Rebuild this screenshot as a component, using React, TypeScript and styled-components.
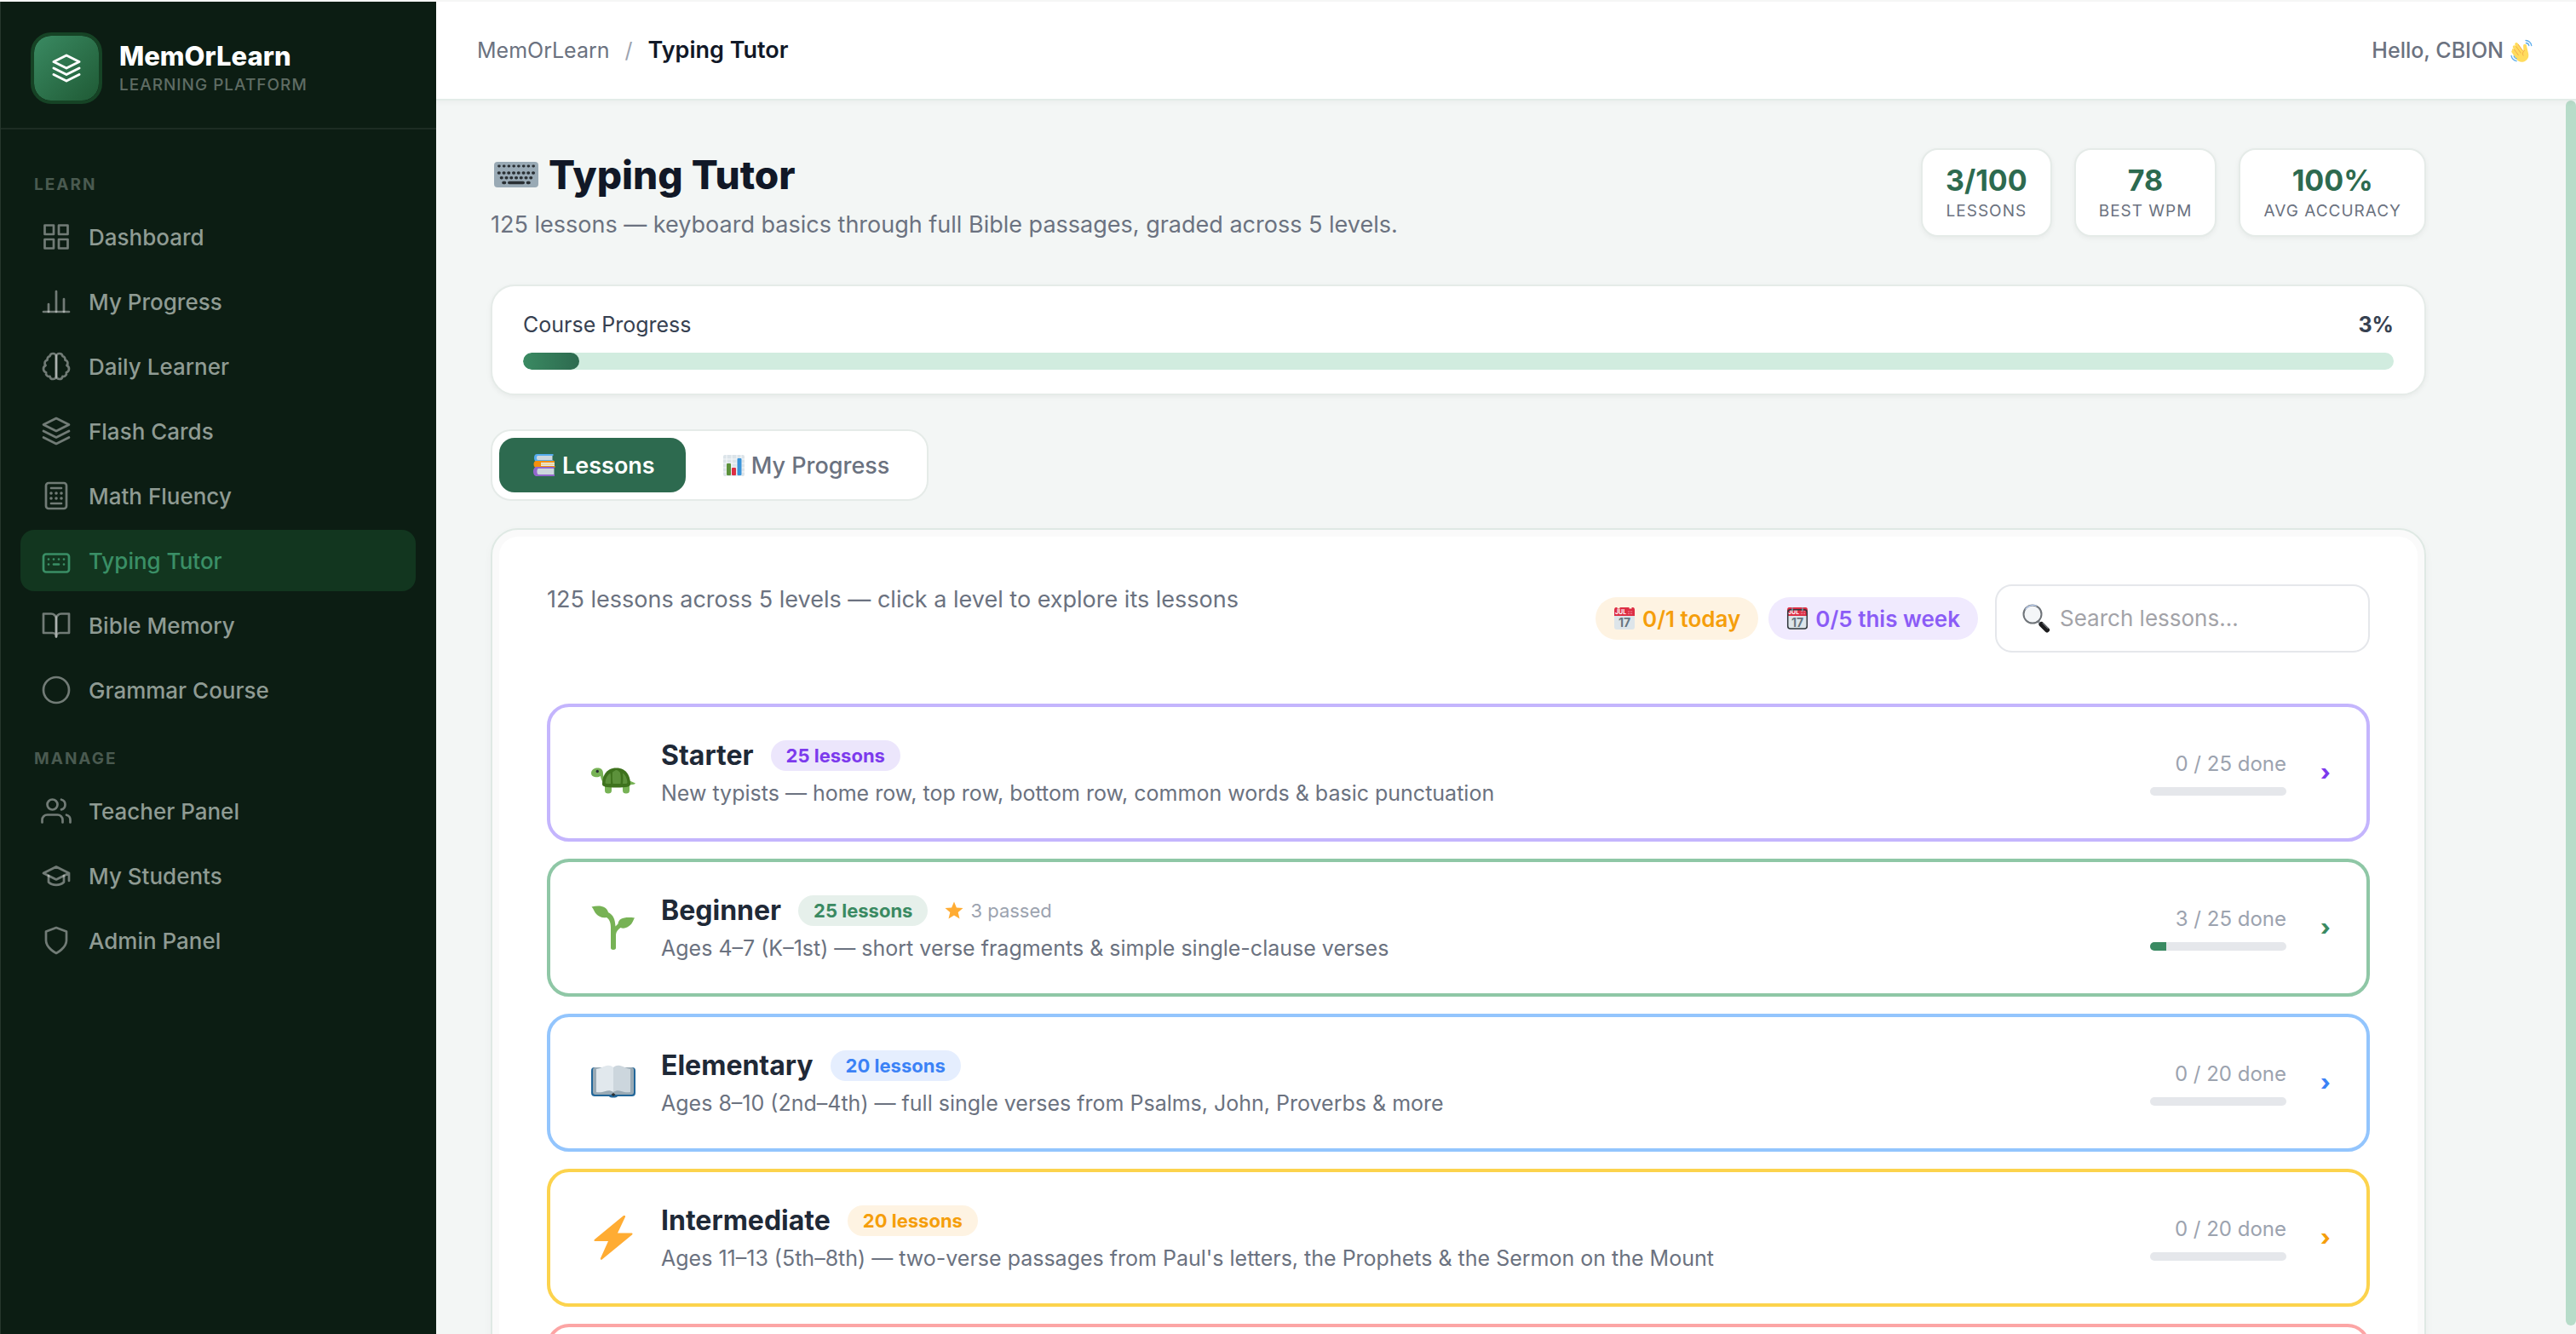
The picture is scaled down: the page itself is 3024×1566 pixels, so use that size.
import React from "react";
import styled, { createGlobalStyle } from "styled-components";

const GlobalStyle = createGlobalStyle`
  *, *::before, *::after { box-sizing: border-box; }
  body {
    margin: 0;
    font-family: Inter, "Open Sans", sans-serif;
    background: #f3f6f5;
    color: #111827;
    -webkit-font-smoothing: antialiased;
  }
  h1, h2, p { margin: 0; }
  button, input { font: inherit; }
`;

/* ---------- shell ---------- */

const Shell = styled.div`
  display: grid;
  grid-template-columns: 512px minmax(0, 1fr);
  height: 100vh;
  overflow: hidden;
  border-top: 2px solid #f5f6f5;
`;

const Sidebar = styled.aside`
  background: #0c1d13;
  border-left: 1px solid #26362c;
  min-height: 0;
`;

const Brand = styled.div`
  display: flex;
  align-items: center;
  gap: 20px;
  padding: 36px 36px 28px 35px;
  border-bottom: 2px solid #1d2c23;
`;

const Logo = styled.div`
  display: grid;
  place-items: center;
  flex: none;
  width: 84px;
  height: 84px;
  border: 4px solid #164325;
  border-radius: 24px;
  background: linear-gradient(135deg, #3a8a62, #1f5a35) padding-box;
`;

const BrandText = styled.div`
  display: flex;
  flex-direction: column;
`;

const BrandName = styled.span`
  font-size: 31px;
  line-height: 40px;
  font-weight: 800;
  color: #ffffff;
`;

const BrandTag = styled.span`
  font-size: 19px;
  line-height: 28px;
  font-weight: 500;
  letter-spacing: 1px;
  color: #5f6c64;
`;

const Nav = styled.nav`
  display: flex;
  flex-direction: column;
  gap: 30px;
  padding: 50px 24px 24px 23px;
`;

const NavGroup = styled.div`
  display: flex;
  flex-direction: column;
  gap: 4px;
`;

const NavLabel = styled.h2`
  margin-bottom: 6px;
  padding: 0 16px;
  font-size: 19px;
  line-height: 30px;
  font-weight: 700;
  letter-spacing: 2px;
  color: #4a5a50;
`;

const NavLink = styled.a<{ $active?: boolean }>`
  display: flex;
  align-items: center;
  gap: 20px;
  height: 72px;
  padding: 0 24px;
  border-radius: 16px;
  font-size: 26px;
  font-weight: 500;
  text-decoration: none;
  color: ${(p) => (p.$active ? "#3a8f66" : "#8f9b93")};
  background: ${(p) => (p.$active ? "#12361f" : "transparent")};
`;

const LineIcon = styled.svg<{ $tone: string; $weight?: number }>`
  flex: none;
  width: 36px;
  height: 36px;
  fill: none;
  stroke: ${(p) => p.$tone};
  stroke-width: ${(p) => p.$weight ?? 1.8};
  stroke-linecap: round;
  stroke-linejoin: round;
`;

/* ---------- top bar ---------- */

const Main = styled.div`
  display: flex;
  flex-direction: column;
  min-height: 0;
`;

const TopBar = styled.header`
  position: relative;
  display: flex;
  align-items: center;
  justify-content: space-between;
  flex: none;
  height: 116px;
  padding: 0 50px 0 48px;
  background: #ffffff;
  border-bottom: 2px solid #e3ece8;
  box-shadow: 0 2px 6px rgba(0, 0, 0, 0.04);
`;

const Crumbs = styled.nav`
  display: flex;
  align-items: center;
  gap: 18px;
  font-size: 25px;
  line-height: 36px;
  color: #6b7280;
`;

const CrumbLink = styled.a`
  color: inherit;
  text-decoration: none;
`;

const Slash = styled.span`
  color: #9ca3af;
`;

const CrumbCurrent = styled.span`
  font-size: 27px;
  font-weight: 600;
  color: #111827;
`;

const Greeting = styled.div`
  display: flex;
  align-items: center;
  gap: 8px;
  font-size: 25px;
  line-height: 36px;
  font-weight: 500;
  color: #6b7280;
`;

const Picture = styled.svg<{ $w: number; $h?: number }>`
  flex: none;
  display: block;
  width: ${(p) => p.$w}px;
  height: ${(p) => p.$h ?? p.$w}px;
`;

/* ---------- page ---------- */

const Body = styled.div`
  display: flex;
  flex: 1;
  min-height: 0;
`;

const Scroller = styled.main`
  flex: 1;
  min-width: 0;
  overflow: hidden;
`;

const ScrollTrack = styled.div`
  flex: none;
  width: 12px;
  padding-bottom: 10px;
`;

const ScrollThumb = styled.div`
  height: 100%;
  border-radius: 6px;
  background: #b7dcc9;
`;

const Page = styled.div`
  max-width: 2400px;
  padding: 56px 64px;
`;

const PageHead = styled.div`
  display: flex;
  align-items: flex-start;
  justify-content: space-between;
  margin-bottom: 50px;
`;

const Title = styled.h1`
  display: flex;
  align-items: center;
  gap: 12px;
  padding-left: 4px;
  font-size: 46px;
  line-height: 62px;
  font-weight: 800;
  color: #111827;
`;

const Subtitle = styled.p`
  margin-top: 8px;
  font-size: 27px;
  line-height: 40px;
  color: #6b7280;
`;

const Stats = styled.div`
  display: flex;
  gap: 26px;
`;

const surface = `
  background: #ffffff;
  border: 2px solid #e5ebe8;
  box-shadow: 0 2px 6px rgba(0, 0, 0, 0.05);
`;

const Stat = styled.div`
  ${surface}
  display: flex;
  flex-direction: column;
  gap: 2px;
  padding: 16px 27px 14px;
  border-radius: 20px;
  text-align: center;
`;

const StatValue = styled.span`
  font-size: 34px;
  line-height: 40px;
  font-weight: 700;
  color: #2d6a4f;
`;

const StatLabel = styled.span`
  font-size: 19px;
  line-height: 28px;
  letter-spacing: 1px;
  color: #6b7280;
`;

const ProgressCard = styled.section`
  ${surface}
  padding: 26px 36px 28px;
  border-radius: 28px;
  margin-bottom: 40px;
`;

const ProgressHead = styled.div`
  display: flex;
  justify-content: space-between;
  margin-bottom: 14px;
  font-size: 25px;
  line-height: 38px;
  color: #374151;
`;

const Bar = styled.div`
  height: 20px;
  border-radius: 10px;
  overflow: hidden;
  background: #d1ecdf;
`;

const BarFill = styled.div`
  height: 100%;
  border-radius: 10px;
  background: linear-gradient(90deg, #3a8a62, #2d6a4f);
`;

const Tabs = styled.div`
  ${surface}
  display: inline-flex;
  gap: 4px;
  padding: 8px;
  border-radius: 24px;
  margin-bottom: 32px;
  vertical-align: top;
  box-shadow: none;
`;

const Tab = styled.button<{ $active?: boolean }>`
  display: flex;
  align-items: center;
  gap: 8px;
  height: 64px;
  padding: 0 36px 0 40px;
  border: 0;
  border-radius: 18px;
  font-size: 27px;
  font-weight: ${(p) => (p.$active ? 600 : 500)};
  color: ${(p) => (p.$active ? "#ffffff" : "#6b7280")};
  background: ${(p) => (p.$active ? "#2d6a4f" : "transparent")};
`;

const Panel = styled.section`
  padding: 64px;
  border: 2px solid #dfe9e4;
  border-radius: 32px;
  background: #ffffff;
  box-shadow: inset 0 0 0 8px #fafafa, 0 4px 12px rgba(0, 0, 0, 0.03);
`;

const Toolbar = styled.div`
  display: flex;
  align-items: flex-start;
  justify-content: space-between;
  margin-bottom: 60px;
`;

const ToolbarText = styled.p`
  font-size: 27px;
  line-height: 36px;
  color: #6b7280;
`;

const Tools = styled.div`
  display: flex;
  align-items: center;
  gap: 20px;
`;

const Goals = styled.div`
  display: flex;
  gap: 12px;
`;

const Goal = styled.span<{ $ink: string; $tint: string }>`
  display: flex;
  align-items: center;
  gap: 8px;
  height: 50px;
  padding: 0 21px;
  border-radius: 25px;
  font-size: 26px;
  font-weight: 600;
  color: ${(p) => p.$ink};
  background: ${(p) => p.$tint};
`;

const Search = styled.label`
  display: flex;
  align-items: center;
  gap: 10px;
  width: 440px;
  height: 80px;
  padding: 0 30px;
  border: 2px solid #e5e7eb;
  border-radius: 20px;
  background: #ffffff;
`;

const SearchInput = styled.input`
  flex: 1;
  min-width: 0;
  padding: 0;
  border: 0;
  outline: 0;
  background: transparent;
  font-size: 26px;
  line-height: 36px;
  color: #111827;
  &::placeholder { color: #a3a3a8; opacity: 1; }
`;

/* ---------- levels ---------- */

const Levels = styled.div`
  display: flex;
  flex-direction: column;
  gap: 20px;
`;

const LevelCard = styled.button<{ $edge: string }>`
  display: flex;
  align-items: center;
  width: 100%;
  min-height: 162px;
  padding: 35px 42px 35px 48px;
  border: 4px solid ${(p) => p.$edge};
  border-radius: 26px;
  background: #ffffff;
  text-align: left;
`;

const LevelText = styled.span`
  display: flex;
  flex: 1;
  flex-direction: column;
  gap: 8px;
  padding: 4px 0 0 30px;
`;

const LevelHead = styled.span`
  display: flex;
  align-items: center;
  gap: 20px;
  line-height: 36px;
`;

const LevelName = styled.span`
  font-size: 32px;
  font-weight: 700;
  color: #1f2937;
`;

const Badge = styled.span<{ $ink: string; $tint: string }>`
  height: 36px;
  padding: 0 18px;
  border-radius: 18px;
  font-size: 22px;
  font-weight: 700;
  color: ${(p) => p.$ink};
  background: ${(p) => p.$tint};
`;

const Passed = styled.span`
  display: flex;
  align-items: center;
  gap: 8px;
  font-size: 22px;
  color: #9ca3af;
`;

const LevelDesc = styled.span`
  font-size: 25px;
  line-height: 36px;
  color: #6b7280;
`;

const LevelDone = styled.span`
  display: flex;
  flex-direction: column;
  gap: 11px;
  width: 160px;
  margin-right: 40px;
  font-size: 24px;
  line-height: 32px;
  text-align: right;
  white-space: nowrap;
  color: #9ca3af;
`;

const MiniBar = styled.span`
  display: block;
  height: 10px;
  border-radius: 5px;
  overflow: hidden;
  background: #e5e7eb;
`;

const MiniFill = styled.span<{ $ink: string }>`
  display: block;
  height: 100%;
  background: ${(p) => p.$ink};
`;

const Chevron = styled.span<{ $ink: string }>`
  width: 12px;
  font-size: 26px;
  line-height: 32px;
  font-weight: 800;
  color: ${(p) => p.$ink};
`;

/* ---------- drawings ---------- */

const layers = (
  <>
    <path d="M12 2 2 7l10 5 10-5z" />
    <path d="m2 12 10 5 10-5" />
    <path d="m2 17 10 5 10-5" />
  </>
);

const icons: Record<string, React.ReactNode> = {
  grid: (
    <>
      <rect x="3" y="3" width="7" height="7" />
      <rect x="14" y="3" width="7" height="7" />
      <rect x="3" y="14" width="7" height="7" />
      <rect x="14" y="14" width="7" height="7" />
    </>
  ),
  bars: (
    <>
      <path d="M18 20V10" />
      <path d="M12 20V4" />
      <path d="M6 20v-6" />
      <path d="M2 20h20" />
    </>
  ),
  brain: (
    <>
      <path d="M9.5 2A2.5 2.5 0 0 1 12 4.5v15a2.5 2.5 0 0 1-4.96.44 2.5 2.5 0 0 1-2.96-3.08 3 3 0 0 1-.34-5.58 2.5 2.5 0 0 1 1.32-4.24 2.5 2.5 0 0 1 1.98-3A2.5 2.5 0 0 1 9.5 2Z" />
      <path d="M14.5 2A2.5 2.5 0 0 0 12 4.5v15a2.5 2.5 0 0 0 4.96.44 2.5 2.5 0 0 0 2.96-3.08 3 3 0 0 0 .34-5.58 2.5 2.5 0 0 0-1.32-4.24 2.5 2.5 0 0 0-1.98-3A2.5 2.5 0 0 0 14.5 2Z" />
    </>
  ),
  layers,
  calculator: (
    <>
      <rect x="4" y="2" width="16" height="20" rx="2" />
      <path d="M8 6h8M8 18h8" />
      <path strokeWidth="2.4" d="M8 10h.01M12 10h.01M16 10h.01M8 14h.01M12 14h.01M16 14h.01" />
    </>
  ),
  keyboard: (
    <>
      <rect x="2" y="7" width="20" height="14" rx="2" />
      <path d="M6 11h.01M10 11h.01M14 11h.01M18 11h.01M6 15h.01M10 15h4M18 15h.01" />
    </>
  ),
  book: (
    <>
      <path d="M2 3h6a4 4 0 0 1 4 4v14a3 3 0 0 0-3-3H2z" />
      <path d="M22 3h-6a4 4 0 0 0-4 4v14a3 3 0 0 1 3-3h7z" />
    </>
  ),
  circle: <circle cx="12" cy="12" r="10" />,
  users: (
    <>
      <path d="M17 21v-2a4 4 0 0 0-4-4H5a4 4 0 0 0-4 4v2" />
      <circle cx="9" cy="7" r="4" />
      <path d="M23 21v-2a4 4 0 0 0-3-3.87" />
      <path d="M16 3.13a4 4 0 0 1 0 7.75" />
    </>
  ),
  cap: (
    <>
      <path d="M22 10v6M2 10l10-5 10 5-10 5z" />
      <path d="M6 12v5c3 3 9 3 12 0v-5" />
    </>
  ),
  shield: <path d="M12 22s8-4 8-10V5l-8-3-8 3v7c0 6 8 10 8 10z" />,
};

const Wave = () => (
  <Picture $w={27} viewBox="0 0 36 36" aria-hidden="true">
    <path fill="#FFDC5D" d="M2.600 15.500c1-.8 2.500-.5 3.300.6l-1.800-2.600c-.8-1.200-.5-2.700.7-3.500 1.100-.8 2.700-.5 3.500.6l-.900-1.400c-.8-1.100-.5-2.700.6-3.500 1.200-.8 2.700-.5 3.500.6l8.300 11.700c1-.3.500-3.700.3-7.200-.1-1.700 1-3 2.600-3s2.500 1 2.700 2.700l2.600 11.500c1.200 5-.4 9-4 11.500-5 3.400-11.400 2.600-14.900-2.400l-7-10.500c-.7-1.100-.600-2.500.5-3.100z" />
    <path fill="none" stroke="#EF9645" strokeWidth="1" strokeLinecap="round" d="m6 16.200 6.500 8.800M9 11.500l7.300 10M12.500 8.500l6.800 9.500M22 18c-3 2-3.500 5-2 7.500" />
    <path fill="none" stroke="#5DADEC" strokeWidth="1.800" strokeLinecap="round" d="M24 2c4.500 0 8.500 3.500 9 8M24.500 6c2.500.2 4.200 1.800 4.500 4M1.500 26c.5 4 3.800 7.800 8 8.200M5.500 26.500c.5 2 2 3.500 4 4" />
  </Picture>
);

const Keyboard = () => (
  <Picture $w={52} $h={30} viewBox="0 0 52 30" aria-hidden="true">
    <rect width="52" height="30" rx="4" fill="#99AAB5" />
    <g stroke="#292F33" strokeWidth="3.600" strokeLinecap="round">
      <path d="M5.500 5h.8M11.300 5h.8M17 5h.8M22.800 5h.8M28.500 5h.8M34.300 5h.8M40 5h.8M45.800 5h.8" strokeWidth="2.800" />
      <path d="M5.500 13h.5M11.300 13h.5M17 13h.5M22.800 13h.5M28.500 13h.5M34.300 13h.5M40 13h.5M45.800 13h.5" />
      <path d="M8.500 18.700h.5M14.300 18.700h.5M20 18.700h.5M25.800 18.700h.5M31.500 18.700h.5M37.300 18.700h.5M43 18.700h.5" />
      <path d="M11 24.500h1.500M17.800 24.500h16.400M39.500 24.500h1.500" />
    </g>
  </Picture>
);

const Books = () => (
  <Picture $w={26} viewBox="0 0 26 26" aria-hidden="true">
    <path fill="#55ACEE" d="M4 0h19v2H5v5h18v2H4C1.500 9 .5 7 .5 4.500S1.500 0 4 0z" transform="translate(.5 0)" />
    <path fill="#CCD6DD" d="M5 2h17.500v5H5c-1.500-1-1.500-4 0-5z" />
    <path fill="#F4900C" d="M3.500 8H25v2H10v4h15.500v2H3.500C1.500 16 .5 14 .5 12s1-4 3-4z" />
    <path fill="#E1E8ED" d="M9 10h16v4H9z" />
    <path fill="#FFCC4D" d="M9 11.500h16v1H9z" />
    <path fill="#9266CC" d="M4 15h20.500v2H5.500v7H25v2H4C1.500 26 0 23.500 0 20.500S1.500 15 4 15z" />
    <path fill="#CCD6DD" d="M5.500 17h19v7h-19c-1.500-1.500-1.500-5.500 0-7z" />
  </Picture>
);

const Chart = () => (
  <Picture $w={25} viewBox="0 0 25 25" aria-hidden="true">
    <rect width="25" height="25" rx="2" fill="#DCE4E9" />
    <path stroke="#F5F8FA" strokeWidth="1" d="M0 5h25M0 10h25M0 15h25M0 20h25M4 0v25M10 0v25M16 0v25M21 0v25" />
    <rect x="4" y="10" width="5" height="14" rx="1" fill="#5C913B" />
    <rect x="10" y="15" width="5" height="9" rx="1" fill="#DD2E44" />
    <rect x="16.500" y="4" width="5" height="20" rx="1" fill="#3B94D9" />
  </Picture>
);

const Calendar = ({ framed }: { framed?: boolean }) => (
  <Picture $w={26} viewBox="0 0 26 26" aria-hidden="true">
    <rect x="1" y="1" width="24" height="25" rx="3" fill="#DDE5EA" />
    <path fill="#DD2E44" d="M1 3c0-2 1-3 2-3h20c1 0 2 1 2 3v7H1z" />
    <path stroke="#F4ABBA" strokeWidth="1" strokeDasharray="1 1" d="M17 5h6M17 7.500h6" />
    <text x="2" y="8" fontFamily="Inter, sans-serif" fontSize="7" fontWeight="700" fill="#ffffff">JUL</text>
    <text x="13" y="23" textAnchor="middle" fontFamily="Inter, sans-serif" fontSize="14" fontWeight="700" fill="#66757F">17</text>
    {framed ? (
      <>
        <rect x="1.700" y="2.700" width="22.600" height="22.300" rx="3" fill="none" stroke="#31373D" strokeWidth="1.500" />
        <path stroke="#8899A6" strokeWidth="1.400" strokeLinecap="round" d="M7 .7v3.600M19 .7v3.600" />
      </>
    ) : (
      <path fill="#FFF3E0" d="M4.500 0h3v1.500h-3zM18.500 0h3v1.500h-3z" />
    )}
  </Picture>
);

const Magnifier = () => (
  <Picture $w={34} viewBox="0 0 34 34" aria-hidden="true">
    <path stroke="#9AA0A6" strokeWidth="3" d="m18 20 4 4" />
    <path stroke="#1c1c1e" strokeWidth="6" strokeLinecap="round" d="m22.500 24 6.500 6.500" />
    <path stroke="#6b7075" strokeWidth="1.200" strokeLinecap="round" d="m24 22.500 6 6" />
    <circle cx="12" cy="12" r="10.500" fill="#f4f6f8" stroke="#6f7479" strokeWidth="2" />
    <path fill="none" stroke="#b9cdee" strokeWidth="1.200" d="M3.500 6.500A10.500 10.500 0 0 1 17 2.500" />
  </Picture>
);

const Turtle = () => (
  <Picture $w={52} viewBox="0 0 52 52" aria-hidden="true">
    <path fill="#77B255" d="M16 40h8v7a4 3.500 0 0 1-8 0zM37 40h8v7a4 3.500 0 0 1-8 0zM44 35l8 3.500c-1 1.500-4 2-8 1.500z" />
    <path fill="#77B255" d="M0 27c0-4 3-6.500 7.500-6.500S14 23 14 27c0 5 3 7 5 10l-4 2c-2-3-3.500-5-4-9-2 1.500-5 1.500-7 1S0 29.500 0 27z" />
    <circle cx="7.300" cy="24.500" r="1.700" fill="#292F33" />
    <path fill="#3E721D" d="M13 39.500C13 31 17 20.500 29.500 20.500S46 31 46 39.500c0 3-4 4-16.500 4s-16.500-1-16.500-4z" />
    <path fill="#5C913B" d="M16.500 37.500c.5-5 2.500-8.500 6-11 1 4 .5 8.500.5 12.500-4 .3-7 .3-6.500-1.500zM25 25.500c1.500-1 3-2.500 4.500-2.500s3.500 1.500 4.500 3c1 4 1 8.500.5 13h-9c-.8-5-.8-9.500-.5-13.500zM37 26.500c3 2 5 6 5.500 10.500.2 2-2 2.300-5.500 2 .5-4 .5-8 0-12.500z" />
  </Picture>
);

const Seedling = () => (
  <Picture $w={52} viewBox="0 0 52 52" aria-hidden="true">
    <path fill="#77B255" d="M23 52V26c0-7-2-10-5-12-5 1-9-1-12-4C3.500 7.500 3 4 .5 1.500 9-.5 18 0 20 8c6 3 8 8 8.500 16.500 1-1 2-2 3-3C32 15 39 13 51 14.500c-2 3-2.500 7-6.500 9.500-3.500 2.500-7 3.500-10 2-3 2-5.500 5-5.500 8.500V50c0 2.500-6 2.500-6 0z" />
  </Picture>
);

const OpenBook = () => (
  <Picture $w={52} viewBox="0 0 52 52" aria-hidden="true">
    <path fill="#226699" d="M4 8h44c3 0 4 1.500 4 4v26c0 3-2 4-4 4H31c-1 2-9 2-10 0H4c-2 0-4-1-4-4V12c0-2.500 1-4 4-4z" />
    <path fill="#99AAB5" d="M5 8h42c2 0 3 1 3 3v26c0 2-1 3-3 3H5c-2 0-3-1-3-3V11c0-2 1-3 3-3z" />
    <path fill="#E1E8ED" d="M6 10c5-1 7-2.500 12-4 4-.8 6.500.5 8 2v29c-5-3.500-9-1-13 0-3 .5-5 .3-7 0z" />
    <path fill="#CCD6DD" d="M46 10c-5-1-7-2.500-12-4-4-.8-6.500.5-8 2v29c5-3.500 9-1 13 0 3 .5 5 .3 7 0z" />
    <path fill="#292F33" d="m26 38 2.500 2-2.500 2-2.500-2z" />
  </Picture>
);

const Bolt = () => (
  <Picture $w={52} viewBox="0 0 52 52" aria-hidden="true">
    <path fill="#FFAC33" d="M38 0 4 28c-1 1-.5 2 .5 2H20L11 50c-.5 1.500.8 2.300 2 1.200L48 22.500c1-1 .5-2-.8-2H31L40 1.500C40.500.3 39.200-.8 38 0z" />
  </Picture>
);

const Star = () => (
  <Picture $w={22} viewBox="0 0 22 22" aria-hidden="true">
    <path fill="#FFAC33" d="m11 .5 2.900 7 7.600.6-5.800 4.900 1.800 7.500L11 16.500l-6.500 4L6.300 13 .5 8.100l7.600-.6z" />
  </Picture>
);

/* ---------- data ---------- */

const navGroups = [
  {
    label: "LEARN",
    items: [
      ["Dashboard", "grid"],
      ["My Progress", "bars"],
      ["Daily Learner", "brain"],
      ["Flash Cards", "layers"],
      ["Math Fluency", "calculator"],
      ["Typing Tutor", "keyboard"],
      ["Bible Memory", "book"],
      ["Grammar Course", "circle"],
    ],
  },
  {
    label: "MANAGE",
    items: [
      ["Teacher Panel", "users"],
      ["My Students", "cap"],
      ["Admin Panel", "shield"],
    ],
  },
];

const stats = [
  ["3/100", "LESSONS"],
  ["78", "BEST WPM"],
  ["100%", "AVG ACCURACY"],
];

const levels = [
  {
    name: "Starter",
    desc: "New typists — home row, top row, bottom row, common words & basic punctuation",
    total: 25,
    done: 0,
    edge: "#c4b5fd",
    ink: "#7c3aed",
    tint: "#ece6fc",
    art: <Turtle />,
  },
  {
    name: "Beginner",
    desc: "Ages 4–7 (K–1st) — short verse fragments & simple single-clause verses",
    total: 25,
    done: 3,
    edge: "#8fc7a6",
    ink: "#3a8a62",
    tint: "#e6f0eb",
    art: <Seedling />,
  },
  {
    name: "Elementary",
    desc: "Ages 8–10 (2nd–4th) — full single verses from Psalms, John, Proverbs & more",
    total: 20,
    done: 0,
    edge: "#93c5fd",
    ink: "#3b82f6",
    tint: "#e5eefe",
    art: <OpenBook />,
  },
  {
    name: "Intermediate",
    desc: "Ages 11–13 (5th–8th) — two-verse passages from Paul's letters, the Prophets & the Sermon on the Mount",
    total: 20,
    done: 0,
    edge: "#fcd34d",
    ink: "#f59e0b",
    tint: "#fef3e2",
    art: <Bolt />,
  },
];

export default function App() {
  return (
    <>
      <GlobalStyle />
      <Shell>
        <Sidebar>
          <Brand>
            <Logo>
              <LineIcon viewBox="0 0 24 24" $tone="#ffffff" $weight={2} aria-hidden="true">
                {layers}
              </LineIcon>
            </Logo>
            <BrandText>
              <BrandName>MemOrLearn</BrandName>
              <BrandTag>LEARNING PLATFORM</BrandTag>
            </BrandText>
          </Brand>
          <Nav aria-label="Main">
            {navGroups.map((group) => (
              <NavGroup key={group.label}>
                <NavLabel>{group.label}</NavLabel>
                {group.items.map(([name, icon]) => {
                  const active = name === "Typing Tutor";
                  return (
                    <NavLink key={name} href="#" $active={active}>
                      <LineIcon
                        viewBox="0 0 24 24"
                        $tone={active ? "#3a8f66" : "rgba(255, 255, 255, 0.42)"}
                        aria-hidden="true"
                      >
                        {icons[icon]}
                      </LineIcon>
                      {name}
                    </NavLink>
                  );
                })}
              </NavGroup>
            ))}
          </Nav>
        </Sidebar>

        <Main>
          <TopBar>
            <Crumbs aria-label="Breadcrumb">
              <CrumbLink href="#">MemOrLearn</CrumbLink>
              <Slash>/</Slash>
              <CrumbCurrent>Typing Tutor</CrumbCurrent>
            </Crumbs>
            <Greeting>
              Hello, CBION <Wave />
            </Greeting>
          </TopBar>

          <Body>
            <Scroller>
              <Page>
                <PageHead>
                  <div>
                    <Title>
                      <Keyboard />
                      Typing Tutor
                    </Title>
                    <Subtitle>
                      125 lessons — keyboard basics through full Bible passages, graded across 5 levels.
                    </Subtitle>
                  </div>
                  <Stats>
                    {stats.map(([value, label]) => (
                      <Stat key={label}>
                        <StatValue>{value}</StatValue>
                        <StatLabel>{label}</StatLabel>
                      </Stat>
                    ))}
                  </Stats>
                </PageHead>

                <ProgressCard>
                  <ProgressHead>
                    <span>Course Progress</span>
                    <strong>3%</strong>
                  </ProgressHead>
                  <Bar>
                    <BarFill style={{ width: "3%" }} />
                  </Bar>
                </ProgressCard>

                <Tabs role="tablist">
                  <Tab role="tab" aria-selected="true" $active>
                    <Books />
                    Lessons
                  </Tab>
                  <Tab role="tab" aria-selected="false">
                    <Chart />
                    My Progress
                  </Tab>
                </Tabs>

                <Panel>
                  <Toolbar>
                    <ToolbarText>125 lessons across 5 levels — click a level to explore its lessons</ToolbarText>
                    <Tools>
                      <Goals>
                        <Goal $ink="#f59e0b" $tint="#fef3e2">
                          <Calendar />
                          0/1 today
                        </Goal>
                        <Goal $ink="#8b5cf6" $tint="#f0eafe">
                          <Calendar framed />
                          0/5 this week
                        </Goal>
                      </Goals>
                      <Search>
                        <Magnifier />
                        <SearchInput type="search" placeholder="Search lessons…" aria-label="Search lessons" />
                      </Search>
                    </Tools>
                  </Toolbar>

                  <Levels>
                    {levels.map((level) => (
                      <LevelCard key={level.name} type="button" $edge={level.edge}>
                        {level.art}
                        <LevelText>
                          <LevelHead>
                            <LevelName>{level.name}</LevelName>
                            <Badge $ink={level.ink} $tint={level.tint}>
                              {level.total} lessons
                            </Badge>
                            {level.done > 0 && (
                              <Passed>
                                <Star />
                                {level.done} passed
                              </Passed>
                            )}
                          </LevelHead>
                          <LevelDesc>{level.desc}</LevelDesc>
                        </LevelText>
                        <LevelDone>
                          {level.done} / {level.total} done
                          <MiniBar>
                            <MiniFill
                              $ink={level.ink}
                              style={{ width: `${(level.done / level.total) * 100}%` }}
                            />
                          </MiniBar>
                        </LevelDone>
                        <Chevron $ink={level.ink}>›</Chevron>
                      </LevelCard>
                    ))}
                    <LevelCard type="button" aria-label="Next level" $edge="#fca5a5" />
                  </Levels>
                </Panel>
              </Page>
            </Scroller>
            <ScrollTrack>
              <ScrollThumb />
            </ScrollTrack>
          </Body>
        </Main>
      </Shell>
    </>
  );
}
